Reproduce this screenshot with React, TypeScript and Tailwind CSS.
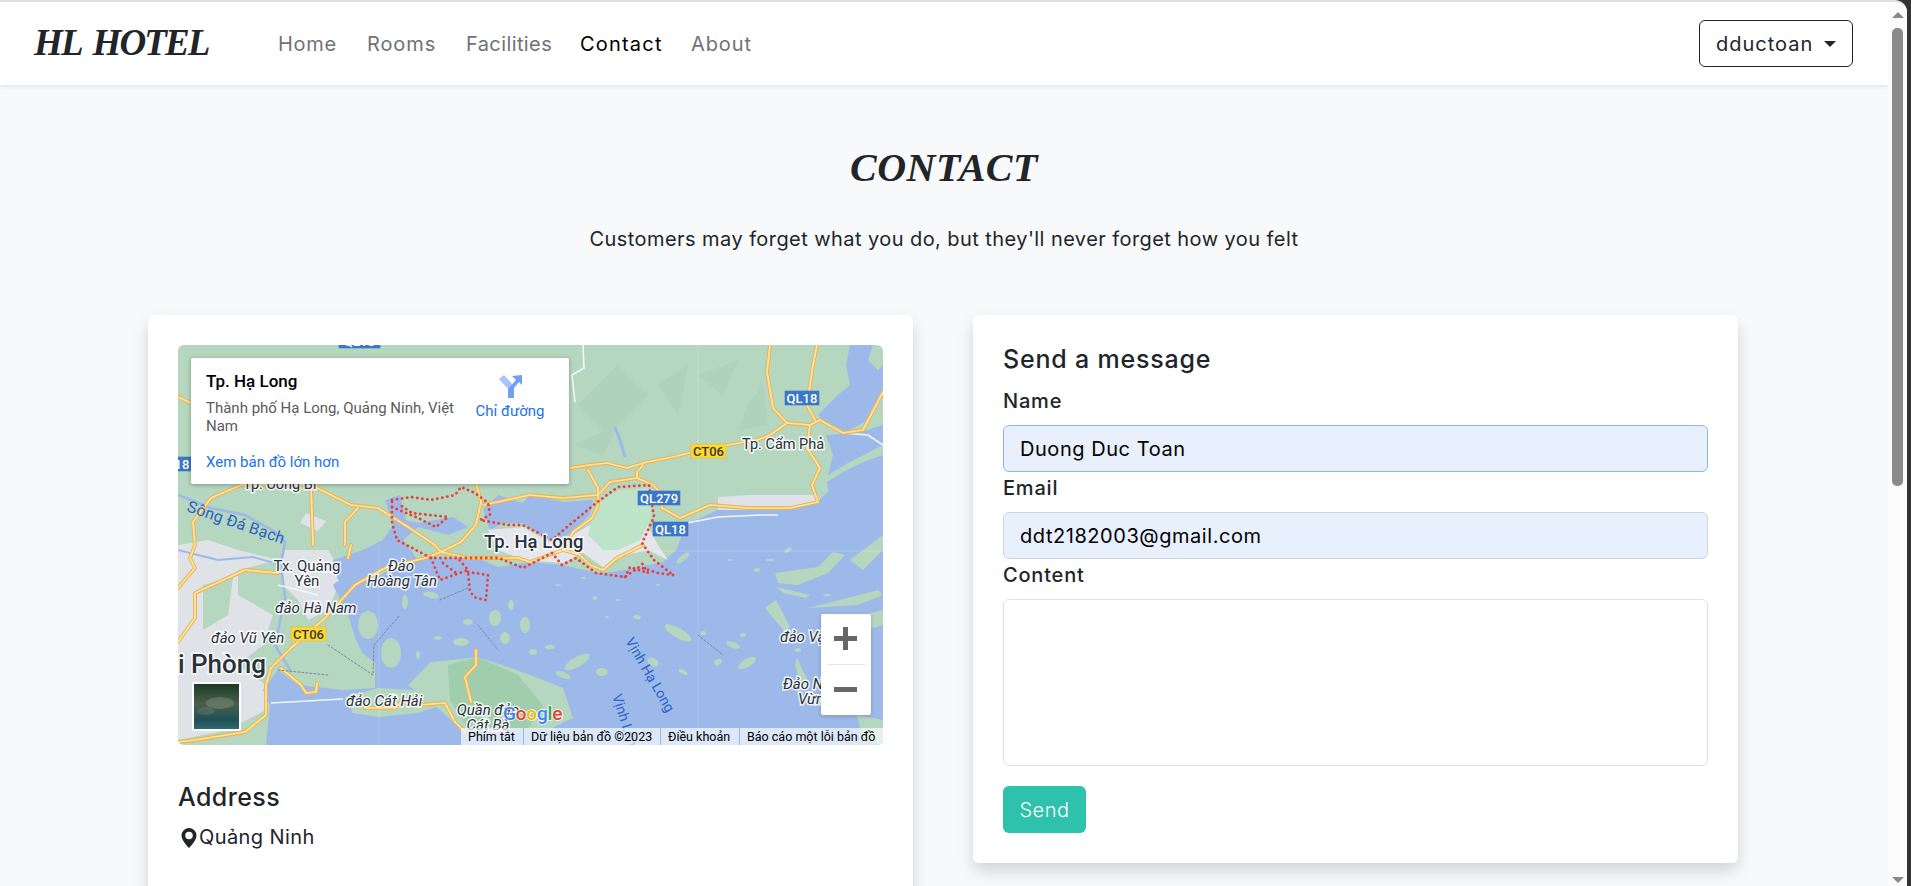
import { BsGeoAltFill } from 'react-icons/bs'

const navLinks = [
  { label: 'Home', active: false, className: 'w-[59px] tracking-[0.7px]' },
  { label: 'Rooms', active: false, className: 'w-[69px] tracking-[0.9px]' },
  { label: 'Facilities', active: false, className: 'w-[84px] tracking-[0.4px]' },
  { label: 'Contact', active: true, className: 'w-[81px] tracking-[1.2px]' },
  { label: 'About', active: false, className: 'w-[60px] tracking-[0.9px]' },
]

const islets: [number, number, number, number, number][] = [
  [399, 317, 14, 5, -30], [424, 327, 6, 4, 0], [385, 330, 8, 3, 20], [372, 302, 5, 2, 0], [355, 307, 4, 3, 0],
  [475, 317, 6, 4, 30], [505, 327, 5, 2, 30], [540, 317, 4, 3, -30], [569, 318, 10, 4, -30], [555, 300, 7, 3, 20],
  [525, 288, 3, 2, 0], [459, 272, 4, 2, 0], [429, 272, 2, 1, 0], [417, 253, 2, 2, 0], [405, 233, 3, 1, 0],
  [579, 225, 3, 2, 0], [592, 215, 5, 1, 0], [552, 215, 2, 1, 0], [505, 213, 8, 3, -40], [649, 250, 4, 1, 0],
  [290, 277, 5, 3, 0], [317, 273, 6, 8, 0], [333, 260, 3, 5, 0], [283, 297, 8, 4, 0], [327, 293, 5, 6, 0],
  [347, 280, 5, 8, 0], [260, 293, 4, 2, 0], [240, 310, 2, 4, 0], [253, 250, 8, 3, 10], [227, 257, 3, 7, 0],
  [213, 308, 10, 15, 0], [190, 280, 10, 14, 0], [500, 288, 15, 5, 30], [565, 290, 3, 2, 0], [455, 305, 3, 2, 0],
  [620, 305, 3, 2, 0], [380, 240, 3, 1, 0], [440, 255, 2, 1, 0], [480, 240, 2, 1, 0], [610, 205, 4, 2, -30],
]

const islands = [
  '597,228 640,222 655,207 667,210 650,228 620,240 600,238',
  '599,242 632,250 628,253 605,248',
  '587,263 607,287 612,282 598,255',
  '705,250 680,260 630,263 650,258 700,245',
  '619,313 632,340 625,345 617,320',
  '679,370 705,375 705,400 685,395',
  '672,215 705,190 705,205 685,225',
  '685,270 705,265 705,280 690,285',
  '150,300 175,300 197,318 197,343 165,345 155,325',
  '167,352 200,343 235,345 270,358 240,368 200,372 175,368',
  '230,340 253,317 273,315 300,312 333,323 360,333 385,343 395,373 372,384 283,384 262,365',
]

const roads = [
  'M0 52 L13 58 M392 123 L412 120 L429 118 L449 123 L469 117 L495 112 L515 107 L549 100 L579 95 L592 90 L609 78 L632 80 L642 75 L665 88 L685 85 L705 47',
  'M592 0 L589 27 L595 63 L609 78',
  'M639 0 L635 20 L629 60 L637 75',
  'M632 80 L629 103 L642 123 L634 140 L640 157 L612 163 L569 163 L532 160 L502 173 L484 163 L482 147 L475 140 L459 133 L432 137 L420 150 L385 153 L352 150 L305 160',
  'M410 125 L420 143 L420 160 L414 173 L395 187 L385 205',
  'M459 133 L459 127 L465 120',
  'M385 205 L402 210 L412 220 L425 225 L439 213 L465 200',
  'M298 138 L303 157 L298 180 L283 197 L263 207 L247 213 L207 223 L177 240 L147 273 L113 303 L93 323 L88 340 L88 370 L67 387 L17 395 L0 397',
  'M133 140 L63 140 L33 153 L15 177 L17 200 L12 213 L17 223 L0 243',
  'M100 228 L67 225 L17 248 L17 273 L0 297',
  'M133 140 L135 200 M173 200 L170 213',
  'M133 140 L173 160 L200 163 L227 180 L257 200 L263 207',
  'M180 163 L167 177 L167 200',
  'M187 363 L217 363 L223 357 L240 360 L267 358 L277 377 L287 387',
  'M298 305 L298 320 L287 332 L293 357',
  'M103 323 L123 340 L128 348 L138 347 L139 338',
  'M263 207 L290 213 L340 213 L352 217 L385 205',
]

const borders = [
  'M214 155 L233 152 L253 155 L277 150 L283 142 L297 148 L310 158 L312 170 L302 175 L330 180 L345 180 L374 195 L389 182 L418 158 L440 142 L471 140 L476 172 L464 198 L476 215 L495 230',
  'M495 230 L480 228 L461 222 L447 232 L418 228 L398 213 L384 220 L374 208 L345 223 L321 213 L253 213 L219 195 L214 178 L214 155',
  'M214 162 L238 172 L258 182 L270 172 L234 168 L222 160',
  'M253 213 L262 235 L290 225 L280 213 M265 218 L278 228',
  'M290 227 L310 230 L308 255 L298 253 L292 247 L290 227',
  'M447 232 L452 222 L470 228 L462 215',
]

const labels: { t: string; x: number; y: number; s?: number; w?: number; i?: boolean; a?: 'start' | 'middle' | 'end' }[] = [
  { t: 'Tp. Cẩm Phả', x: 564, y: 104, s: 14.5 },
  { t: 'Tp. Uông Bí', x: 65, y: 144, s: 14.5 },
  { t: 'Tx. Quảng', x: 129, y: 226, s: 15, a: 'middle' },
  { t: 'Yên', x: 129, y: 241, s: 15, a: 'middle' },
  { t: 'Đảo', x: 223, y: 226, s: 15, i: true, a: 'middle' },
  { t: 'Hoàng Tân', x: 224, y: 241, s: 15, i: true, a: 'middle' },
  { t: 'đảo Hà Nam', x: 97, y: 268, s: 15, i: true },
  { t: 'đảo Vũ Yên', x: 33, y: 298, s: 15, i: true },
  { t: 'Quần đảo', x: 310, y: 370, s: 15, i: true, a: 'middle' },
  { t: 'Cát Bà', x: 310, y: 385, s: 15, i: true, a: 'middle' },
  { t: 'đảo Cát Hải', x: 168, y: 361, s: 15, i: true },
  { t: 'đảo Vạn', x: 602, y: 297, s: 15, i: true },
  { t: 'Đảo Ngọc', x: 605, y: 344, s: 15, i: true },
  { t: 'Vừng', x: 620, y: 359, s: 15, i: true },
  { t: 'Tp. Hạ Long', x: 306, y: 203, s: 18.5, w: 500 },
  { t: 'Hải Phòng', x: 88, y: 328, s: 26, w: 500, a: 'end' },
]

const shields: { t: string; x: number; y: number; w: number; yellow?: boolean }[] = [
  { t: 'QL18', x: 607, y: 46, w: 34 },
  { t: 'CT06', x: 513, y: 99, w: 35, yellow: true },
  { t: 'QL279', x: 460, y: 146, w: 42 },
  { t: 'QL18', x: 475, y: 177, w: 35 },
  { t: 'QL18', x: -21, y: 112, w: 34 },
  { t: 'QL18', x: 161, y: -11, w: 41 },
  { t: 'CT06', x: 113, y: 282, w: 35, yellow: true },
]

function MapCanvas() {
  return (
    <svg viewBox="0 0 705 400" className="block h-[400px] w-full [font-family:Roboto,sans-serif]">
      <rect width="705" height="400" fill="#b5d6bf" />
      {/* terrain shading in the hills */}
      <g fill="#a6cbb2" opacity="0.3">
        <polygon points="400,60 440,20 470,50 430,90" />
        <polygon points="520,30 560,15 545,50" />
        <polygon points="480,40 510,20 500,70" />
        <polygon points="570,60 585,40 590,80 560,85" />
        <polygon points="395,100 440,80 425,110" />
      </g>
      <polygon
        fill="#dfe3e8"
        points="0,200 30,195 60,205 100,215 60,225 60,250 95,270 85,300 60,320 88,340 88,365 50,385 0,395"
      />
      <polygon fill="#dfe3e8" points="105,205 150,205 165,230 150,265 130,275 120,255 105,240" />
      <polygon fill="#dfe3e8" points="128,168 148,176 140,186 122,178" />
      <polygon fill="#b5d6bf" points="25,240 55,232 50,270 25,285" />
      <polygon fill="#dfe3e8" points="540,152 570,150 640,150 645,160 570,165 540,165" />

      {/* sea and bays */}
      <g fill="#9cb9ea">
        <polygon points="705,110 685,117 665,127 649,137 650,147 639,157 612,165 569,165 539,165 525,172 509,178 498,205 485,217 435,227 419,228 385,220 352,217 320,222 300,213 250,213 215,222 195,235 175,238 165,232 155,240 170,270 178,295 195,330 165,345 120,340 100,325 85,345 92,360 88,400 705,400" />
        <polygon points="672,0 695,0 690,15 700,25 705,20 705,50 690,75 668,87 650,80 640,70 660,50 672,40 668,20" />
        <polygon points="648,90 680,88 705,80 705,100 670,118 650,130 655,110" />
        <polygon points="207,155 222,150 228,175 240,178 275,172 290,182 270,190 240,182 225,195 240,215 205,222 180,240 160,235 155,215 185,205 205,195 215,180" />
        <polygon points="305,165 320,150 345,158 352,150 385,157 415,155 412,170 390,190 370,195 345,178 325,178 312,185" />
      </g>
      <path
        d="M0 150 L33 163 L67 170 L97 187 L107 197 L103 220 L107 253 L97 300 L113 327"
        fill="none"
        stroke="#9cb9ea"
        strokeWidth="2.5"
      />
      <path d="M0 205 L40 215 L75 212 L103 220" fill="none" stroke="#9cb9ea" strokeWidth="2" />
      <path d="M447 112 L442 95 L437 82" fill="none" stroke="#9cb9ea" strokeWidth="3" />

      {/* islands */}
      <g fill="#b5d6bf">
        {islands.map((p) => (
          <polygon key={p} points={p} />
        ))}
        {islets.map(([cx, cy, rx, ry, rot]) => (
          <ellipse key={`${cx}-${cy}`} cx={cx} cy={cy} rx={rx} ry={ry} transform={`rotate(${rot} ${cx} ${cy})`} />
        ))}
      </g>
      <polygon fill="#a0cdab" points="270,320 300,312 340,330 365,360 350,384 290,384 272,355" />

      {/* Ha Long town */}
      <polygon
        fill="#e4e6ec"
        points="310,185 345,182 372,197 395,190 420,175 465,172 480,200 490,215 470,205 440,212 425,222 405,208 385,218 345,215 320,205"
      />
      <polygon fill="#bde3c8" points="418,160 440,145 470,143 474,172 462,195 440,205 425,205 410,190" />

      {/* white local roads */}
      <path
        d="M509 178 L540 172 L582 170 L600 170 M405 0 L406 23 L394 30 L397 57 M665 88 L690 90 L705 100 M93 358 L165 354 M100 240 L140 250"
        fill="none"
        stroke="#f4f6f8"
        strokeWidth="1.6"
      />

      {/* roads */}
      <g fill="none" strokeLinejoin="round" strokeLinecap="round">
        {roads.map((d) => (
          <path key={d} d={d} stroke="#eeb44f" strokeWidth="3.8" />
        ))}
        {roads.map((d) => (
          <path key={`${d}-in`} d={d} stroke="#fce6a8" strokeWidth="1.7" />
        ))}
        {borders.map((d) => (
          <path key={d} d={d} stroke="#e8413a" strokeWidth="2.8" strokeDasharray="0.1 5" />
        ))}
        <path d="M262 255 L290 243 M300 280 L320 305 M520 290 L545 310 M150 300 L195 330 L196 300 L222 270 M100 325 L150 330" stroke="#7b8896" strokeWidth="1" strokeDasharray="2 2" />
      </g>

      {/* tile seams */}
      <path d="M201 200 V400 M520 0 V400 M352 206 H705" stroke="#ffffff" strokeOpacity="0.2" fill="none" />

      {labels.map((l) => (
        <text
          key={l.t}
          x={l.x}
          y={l.y}
          fontSize={l.s}
          fontWeight={l.w ?? 400}
          fontStyle={l.i ? 'italic' : 'normal'}
          textAnchor={l.a ?? 'start'}
          fill="#28313c"
          stroke="#ffffff"
          strokeOpacity="0.85"
          strokeWidth="3"
          className="[paint-order:stroke]"
        >
          {l.t}
        </text>
      ))}
      <text x="8" y="166" fontSize="16" fill="#2b63c4" transform="rotate(19 8 166)" letterSpacing="0.2">
        Sông Đá Bạch
      </text>
      <text x="447" y="296" fontSize="14" fill="#2b63c4" transform="rotate(60 447 296)">
        Vịnh Hạ Long
      </text>
      <text x="434" y="351" fontSize="14" fill="#2b63c4" transform="rotate(72 434 351)">
        Vịnh Lan Hạ
      </text>

      {shields.map((s) => (
        <g key={`${s.x}-${s.y}`}>
          <rect
            x={s.x}
            y={s.y}
            width={s.w}
            height="14"
            fill={s.yellow ? '#fdd835' : '#3a76c9'}
            stroke={s.yellow ? '#eebb30' : '#3a76c9'}
            strokeWidth="0.6"
          />
          <text
            x={s.x + s.w / 2}
            y={s.y + 11.5}
            fontSize="13"
            fontWeight="500"
            textAnchor="middle"
            fill={s.yellow ? '#3a3a30' : '#ffffff'}
          >
            {s.t}
          </text>
        </g>
      ))}

      <text x="325" y="375" fontSize="19" fontWeight="500" stroke="#ffffff" strokeOpacity="0.7" strokeWidth="2" className="[paint-order:stroke]" letterSpacing="-0.2">
        <tspan fill="#4285f4">G</tspan>
        <tspan fill="#ea4335">o</tspan>
        <tspan fill="#fbbc04">o</tspan>
        <tspan fill="#4285f4">g</tspan>
        <tspan fill="#34a853">l</tspan>
        <tspan fill="#ea4335">e</tspan>
      </text>

      {/* satellite thumbnail */}
      <rect x="14" y="337" width="49" height="49" rx="2" fill="#ffffff" />
      <defs>
        <linearGradient id="sat" x1="0" y1="0" x2="0" y2="1">
          <stop offset="0" stopColor="#1d3a25" />
          <stop offset="0.45" stopColor="#4a5f4d" />
          <stop offset="0.8" stopColor="#1f4f57" />
          <stop offset="1" stopColor="#2d6a72" />
        </linearGradient>
      </defs>
      <rect x="16" y="339" width="45" height="45" fill="url(#sat)" />
      <ellipse cx="42" cy="358" rx="14" ry="6" fill="#8f9a88" opacity="0.4" />
      <ellipse cx="28" cy="366" rx="9" ry="4" fill="#6d7d6d" opacity="0.4" />
    </svg>
  )
}

function GoogleMap() {
  return (
    <div className="relative h-[400px] w-[705px] overflow-hidden rounded-md [font-family:Roboto,sans-serif]">
      <MapCanvas />

      {/* place card */}
      <div className="absolute left-[13px] top-[13px] flex h-[126px] w-[378px] rounded-[2px] bg-white pl-[15px] shadow-[0_1px_4px_rgba(0,0,0,0.3)]">
        <div className="w-[257px] pt-[13px]">
          <div className="text-[17px] font-medium leading-[20px] text-black">Tp. Hạ Long</div>
          <div className="mt-[8px] text-[15px] leading-[18px] text-[#5b5b5b]">
            Thành phố Hạ Long, Quảng Ninh, Việt Nam
          </div>
          <div className="mt-[18px] text-[15px] leading-[18px] text-[#1a73e8]">Xem bản đồ lớn hơn</div>
        </div>
        <div className="ml-[3px] flex w-[88px] flex-col items-center pt-[16px]">
          <svg width="23" height="24" viewBox="0 0 23 24">
            <polygon points="0,5 5,1 15,12 15,24 9,24 9,15" fill="#a8c4fb" />
            <polygon points="9,24 9,15 17,6 13,2 23,1 23,11 20,8 15,14 15,24" fill="#6f9ff7" />
          </svg>
          <div className="mt-[4px] whitespace-nowrap text-[15px] leading-[18px] text-[#1a73e8]">Chỉ đường</div>
        </div>
      </div>

      {/* zoom buttons */}
      <div className="absolute left-[643px] top-[269px] flex h-[101px] w-[50px] flex-col items-center rounded-[2px] bg-white shadow-[0_1px_4px_rgba(0,0,0,0.2)]">
        <div className="relative h-[50px] w-full">
          <div className="absolute left-[13px] top-[22px] h-[5px] w-[23px] bg-[#666666]" />
          <div className="absolute left-[22px] top-[13px] h-[23px] w-[5px] bg-[#666666]" />
        </div>
        <div className="h-px w-[37px] bg-[#e6e6e6]" />
        <div className="relative h-[50px] w-full">
          <div className="absolute left-[13px] top-[22px] h-[5px] w-[23px] bg-[#666666]" />
        </div>
      </div>

      {/* attribution */}
      <div className="absolute bottom-0 right-0 flex h-[17px] items-center bg-white/65 text-[12.5px] leading-[17px] text-black">
        <span className="w-[62px] whitespace-nowrap pl-[7px]">Phím tắt</span>
        <span className="w-[137px] whitespace-nowrap border-l border-[#9cb9ea] pl-[7px]">Dữ liệu bản đồ ©2023</span>
        <span className="w-[79px] whitespace-nowrap border-l border-[#9cb9ea] pl-[7px]">Điều khoản</span>
        <span className="w-[144px] whitespace-nowrap border-l border-[#9cb9ea] pl-[7px]">Báo cáo một lỗi bản đồ</span>
      </div>
    </div>
  )
}

function Field({ label, value, focused }: { label: string; value: string; focused?: boolean }) {
  return (
    <div>
      <label className="mb-[12px] mt-[4px] block h-6 text-[20px] font-medium leading-6 tracking-[0.8px]">{label}</label>
      <input
        readOnly
        value={value}
        className={`block h-[47px] w-full rounded-md border bg-[#e8f0fe] px-4 text-[20px] tracking-[0.55px] text-black outline-none ${
          focused ? 'border-[#86b7fe]' : 'border-[#ced4da]'
        }`}
      />
    </div>
  )
}

export default function App() {
  return (
    <div className="h-[886px] w-full overflow-hidden bg-[#333333] text-[#212529] [font-family:Inter,sans-serif]">
      <div className="flex h-full w-[1907px] overflow-hidden rounded-tr-[12px] border-t-2 border-[#e0e0e0] bg-[#f8f9fa]">
        <main className="h-full w-[1888px] shrink-0">
          <nav className="flex h-[83px] items-center bg-white pl-[34px] pr-[35px] shadow-[0_2px_4px_rgba(0,0,0,0.075)]">
            <a className="-mt-[3px] w-[244px] whitespace-nowrap text-[37px] font-bold italic leading-none tracking-[-1.9px] [word-spacing:5px] [font-family:'Liberation_Serif',serif]">
              HL HOTEL
            </a>
            <ul className="flex gap-[30px] text-[20px]">
              {navLinks.map((link) => (
                <li
                  key={link.label}
                  className={`${link.className} whitespace-nowrap ${link.active ? 'text-black' : 'text-[#6f7276]'}`}
                >
                  {link.label}
                </li>
              ))}
            </ul>
            <button className="ml-auto flex h-[47px] w-[154px] items-center rounded-md border border-[#212529] pl-4 text-[20px] tracking-[1px]">
              dductoan
              <span className="ml-[11px] h-0 w-0 border-x-[6px] border-t-[6px] border-x-transparent border-t-[#212529]" />
            </button>
          </nav>

          <h2 className="mt-[59px] h-[48px] text-center text-[40px] font-bold italic leading-[48px] tracking-[0.5px] [font-family:'Liberation_Serif',serif]">
            CONTACT
          </h2>
          <p className="mt-[34px] h-[27px] text-center text-[20px] leading-[27px] tracking-[0.43px]">
            Customers may forget what you do, but they&apos;ll never forget how you felt
          </p>

          <div className="mt-[62px] flex items-start gap-[60px] pl-[148px]">
            <section className="h-[620px] w-[765px] rounded-md bg-white p-[30px] shadow-[0_8px_16px_rgba(0,0,0,0.15)]">
              <GoogleMap />
              <h5 className="mt-[34px] h-9 text-[25px] font-medium leading-9 tracking-[0.4px]">Address</h5>
              <div className="mt-[9px] flex items-center text-[20px] leading-[27px] tracking-[0.4px]">
                <BsGeoAltFill className="ml-[1px] h-[20px] w-[20px]" />
                <span>Quảng Ninh</span>
              </div>
            </section>

            <section className="w-[765px] rounded-md bg-white p-[30px] shadow-[0_8px_16px_rgba(0,0,0,0.15)]">
              <h5 className="h-[28px] text-[25px] font-medium leading-[28px] tracking-[0.8px]">Send a message</h5>
              <div className="pt-[12px]">
                <Field label="Name" value="Duong Duc Toan" focused />
              </div>
              <Field label="Email" value="ddt2182003@gmail.com" />
              <label className="mb-[12px] mt-[4px] block h-6 text-[20px] font-medium leading-6 tracking-[0.8px]">
                Content
              </label>
              <textarea readOnly className="block h-[167px] w-full resize-none rounded-md border border-[#dee2e6] bg-white outline-none" />
              <button className="mt-[20px] block h-[47px] w-[83px] rounded-md bg-[#2ec1ac] text-[20px] font-light tracking-[0.5px] text-white">
                Send
              </button>
            </section>
          </div>
        </main>

        {/* browser scrollbar */}
        <div className="relative h-full flex-1 bg-[#fbfbfb]">
          <div className="absolute left-[4px] top-[10px] h-0 w-0 border-x-[6px] border-b-[6px] border-x-transparent border-b-[#8a8a8a]" />
          <div className="absolute left-[4px] top-[26px] h-[458px] w-[11px] rounded-[5px] bg-[#8a8a8a]" />
          <div className="absolute bottom-[3px] left-[4px] h-0 w-0 border-x-[6px] border-t-[6px] border-x-transparent border-t-[#8a8a8a]" />
        </div>
      </div>
    </div>
  )
}
